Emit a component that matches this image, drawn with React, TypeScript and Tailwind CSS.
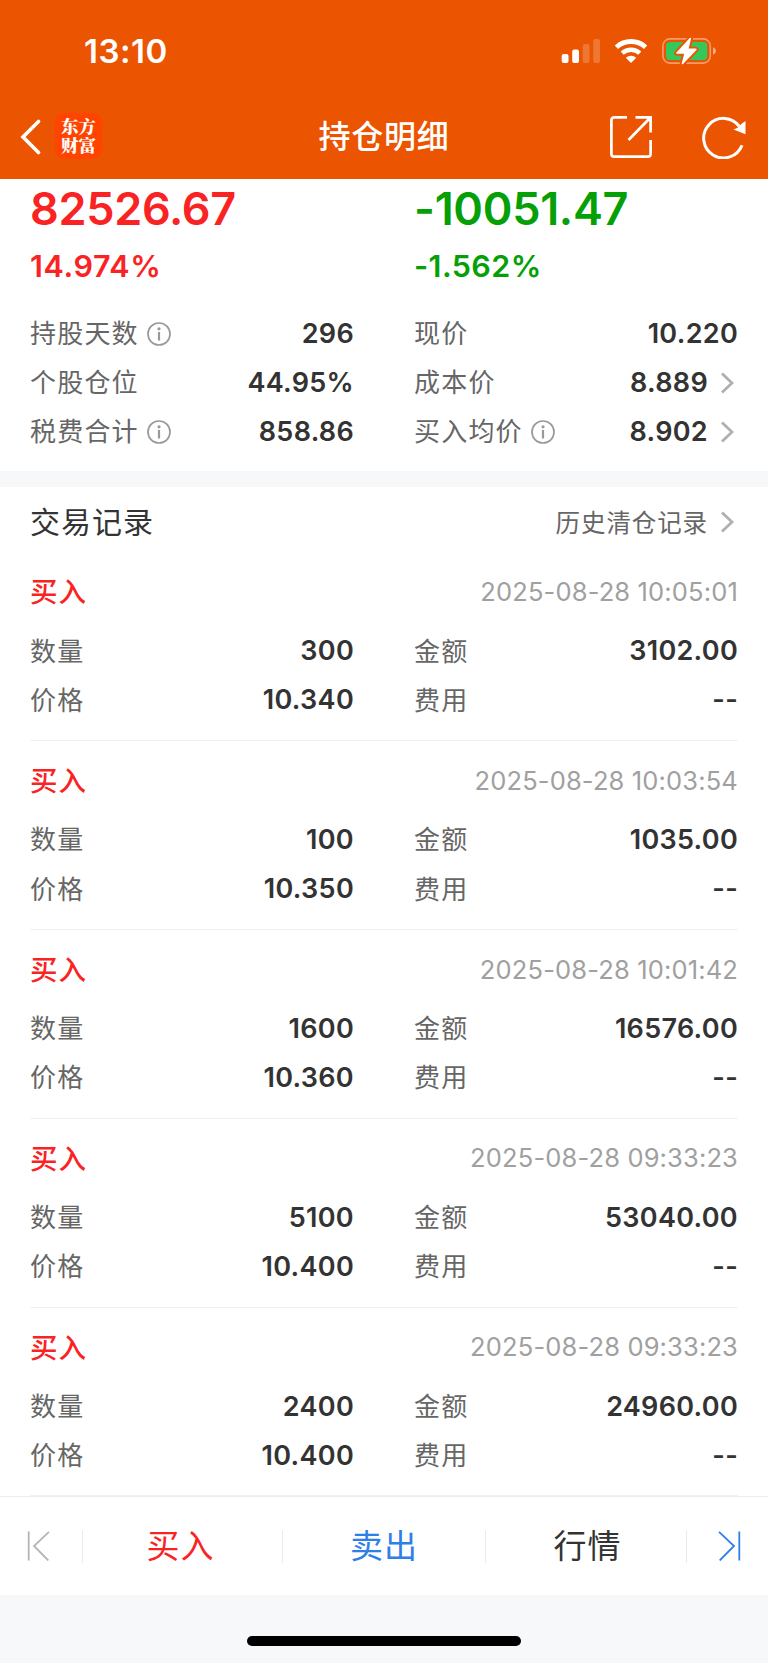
import React from "react";

type Trade = { time: string; qty: string; amount: string; price: string; fee: string };

const trades: Trade[] = [
  { time: "2025-08-28 10:05:01", qty: "300", amount: "3102.00", price: "10.340", fee: "--" },
  { time: "2025-08-28 10:03:54", qty: "100", amount: "1035.00", price: "10.350", fee: "--" },
  { time: "2025-08-28 10:01:42", qty: "1600", amount: "16576.00", price: "10.360", fee: "--" },
  { time: "2025-08-28 09:33:23", qty: "5100", amount: "53040.00", price: "10.400", fee: "--" },
  { time: "2025-08-28 09:33:23", qty: "2400", amount: "24960.00", price: "10.400", fee: "--" },
];

function InfoIcon() {
  return (
    <svg className="ml-[8.500px] h-6 w-6" viewBox="0 0 24 24" fill="none">
      <circle cx="12" cy="12" r="11" stroke="#999" strokeWidth="1.7" />
      <circle cx="12" cy="6.8" r="1.6" fill="#999" />
      <path d="M12 10v8.5" stroke="#999" strokeWidth="2.2" />
    </svg>
  );
}

function Chevron() {
  return (
    <svg className="mr-[4px] ml-[13px] h-[22px] w-[13px]" viewBox="0 0 13 22" fill="none">
      <path d="M1 1.5 11 11 1 20.5" stroke="#b0b0b0" strokeWidth="2.8" />
    </svg>
  );
}

function Row({ label, value, info, arrow }: { label: string; value: string; info?: boolean; arrow?: boolean }) {
  return (
    <div className="flex h-[49.1px] items-center">
      <span className="pt-px text-[26px] leading-[36px] tracking-[1.2px] text-[#666]">{label}</span>
      {info && <InfoIcon />}
      <span className="ml-auto text-[27px] leading-[36px] font-semibold tracking-[0.3px] text-[#333]">{value}</span>
      {arrow && <Chevron />}
    </div>
  );
}

function StatusIcons() {
  return (
    <svg className="h-[30px] w-[160px]" viewBox="560 36 160 30" fill="none">
      <rect x="561.7" y="54" width="6.8" height="9" rx="2" fill="#fff" />
      <rect x="572.2" y="49.5" width="6.8" height="13.5" rx="2" fill="#fff" />
      <rect x="582.7" y="44" width="6.8" height="19" rx="2" fill="#fff" fillOpacity=".2" />
      <rect x="593.2" y="39" width="6.8" height="24" rx="2" fill="#fff" fillOpacity=".2" />
      <path d="M616.4 47.2a21.500 21.500 0 0 1 29.200 0" stroke="#fff" strokeWidth="4.8" />
      <path d="M622.200 53.200a13 13 0 0 1 17.600 0" stroke="#fff" strokeWidth="4.4" />
      <path d="M631 63l-5.2-5.3a7.6 7.6 0 0 1 10.4 0z" fill="#fff" />
      <rect x="662.9" y="38.9" width="47.4" height="24.2" rx="7" stroke="#fff" strokeOpacity=".42" strokeWidth="1.6" />
      <path d="M713 47.3c3.8 1 3.8 6.4 0 7.4z" fill="#fff" fillOpacity=".5" />
      <rect x="666" y="42" width="41.3" height="18" rx="4" fill="#34c759" />
      <path d="M690.3 38.500 677 53h8.2L682.5 63.500 695.8 49.400h-8.2z" fill="#EB5502" stroke="#EB5502" strokeWidth="5.500" strokeLinejoin="round" />
      <path d="M690.3 38.500 677 53h8.2L682.5 63.500 695.8 49.400h-8.2z" fill="#fff" stroke="#fff" strokeWidth="1.600" strokeLinejoin="round" />
    </svg>
  );
}

export default function App() {
  return (
    <div className="flex h-[1663px] w-[768px] flex-col bg-white font-['Inter','Noto_Sans_CJK_SC',sans-serif]">
      <header className="flex h-[179px] shrink-0 flex-col bg-[#EB5502] text-white">
        <div className="flex h-[94px] items-center justify-between pt-[8px] pr-[48px] pl-[84px]">
          <span className="text-[33px] leading-[40px] font-semibold tracking-[0.5px]">13:10</span>
          <StatusIcons />
        </div>
        <div className="grid h-[85px] grid-cols-[1fr_auto_1fr] items-center">
          <div className="flex items-center pl-[20px]">
            <svg className="h-9 w-[22px]" viewBox="0 0 22 36" fill="none">
              <path d="M18.5 2.5 3 18l15.5 15.5" stroke="#fff" strokeWidth="3.6" strokeLinecap="round" />
            </svg>
            <div className="mb-[2px] ml-[13px] flex h-[46px] w-[47px] items-center justify-center rounded-[9px] bg-[#FF4400] pb-px font-['Noto_Serif_CJK_SC','Noto_Sans_CJK_SC',serif] text-[17.5px] leading-[19.5px] font-black">
              <p>
                东方
                <br />
                财富
              </p>
            </div>
          </div>
          <h1 className="text-[32px] leading-[44px] font-medium tracking-[0.8px]">持仓明细</h1>
          <div className="flex items-center justify-end pr-[22px]">
            <svg className="h-[42px] w-[42px]" viewBox="0 0 42 42" fill="none" stroke="#fff" strokeWidth="2.7">
              <path d="M17 1.400H4.100a2.700 2.700 0 0 0-2.700 2.700V37.900a2.700 2.700 0 0 0 2.700 2.700H37.900a2.700 2.700 0 0 0 2.700-2.700V24M25.500 1.400H40.600V16.500M40.500 1.500 18.500 24" />
            </svg>
            <svg className="ml-[50px] h-[44px] w-[44px]" viewBox="0 0 44 44" fill="none">
              <path d="M40 30.200A19.800 19.800 0 1 1 37.500 11.500" stroke="#fff" strokeWidth="3" />
              <path d="M43.500 6v13.200L31.500 14.500q4-1 6-3.500t6-5z" fill="#fff" />
            </svg>
          </div>
        </div>
      </header>

      <section className="grid h-[292px] shrink-0 grid-cols-2 content-start gap-x-[60px] px-[30px]">
        <div className="h-[130px] font-semibold text-[#FA2323]">
          <p className="mt-[2px] text-[45px] leading-[56px] tracking-[-0.3px]">82526.67</p>
          <p className="mt-[9px] text-[30.5px] leading-[40px] tracking-[0.6px]">14.974%</p>
        </div>
        <div className="h-[130px] font-semibold text-[#05A005]">
          <p className="mt-[2px] text-[45px] leading-[56px] tracking-[-0.3px]">-10051.47</p>
          <p className="mt-[9px] text-[30.5px] leading-[40px] tracking-[0.4px]">-1.562%</p>
        </div>
        <Row label="持股天数" value="296" info />
        <Row label="现价" value="10.220" />
        <Row label="个股仓位" value="44.95%" />
        <Row label="成本价" value="8.889" arrow />
        <Row label="税费合计" value="858.86" info />
        <Row label="买入均价" value="8.902" info arrow />
      </section>

      <div className="h-4 shrink-0 bg-[#F6F8FA]" />

      <main className="flex h-[1009px] shrink-0 flex-col px-[30px]">
        <div className="flex h-[65px] shrink-0 items-center justify-between pt-[5px]">
          <h2 className="text-[30px] leading-[42px] tracking-[1px] text-[#333]">交易记录</h2>
          <span className="flex items-center text-[24.500px] leading-[36px] tracking-[0.9px] text-[#666]">
            <span className="pt-px">历史清仓记录</span>
            <Chevron />
          </span>
        </div>
        {trades.map((t, i) => (
          <article key={i} className="h-[188.900px] shrink-0 border-b border-[#F0F0F0]">
            <div className="flex h-[74.500px] items-center justify-between pt-[5px]">
              <span className="pt-px text-[27.500px] leading-[38px] font-medium tracking-[1px] text-[#FA2323]">买入</span>
              <time className="text-[25.500px] leading-[36px] tracking-[0.15px] text-[#A0A0A0]">{t.time}</time>
            </div>
            <div className="grid grid-cols-2 gap-x-[60px]">
              <Row label="数量" value={t.qty} />
              <Row label="金额" value={t.amount} />
              <Row label="价格" value={t.price} />
              <Row label="费用" value={t.fee} />
            </div>
          </article>
        ))}
      </main>

      <nav className="flex h-[99px] shrink-0 items-center border-t border-[#EDEDED] text-[33px] leading-[44px] tracking-[1px]">
        <div className="flex w-[82px] pl-[27px]">
          <svg className="h-[30px] w-[24px]" viewBox="0 0 24 30" fill="none" stroke="#B5B5B5" strokeWidth="1.800">
            <path d="M1.700.5v29M22 .8 7 15l14.300 14.500" />
          </svg>
        </div>
        <div className="h-[33px] w-px bg-[#EAEAEA]" />
        <span className="w-[199px] pr-[4px] text-center text-[#FA2323]">买入</span>
        <div className="h-[33px] w-px bg-[#EAEAEA]" />
        <span className="w-[202px] text-center text-[#2F80E6]">卖出</span>
        <div className="h-[33px] w-px bg-[#EAEAEA]" />
        <span className="flex-1 pl-[3px] text-center text-[#333]">行情</span>
        <div className="h-[33px] w-px bg-[#EAEAEA]" />
        <div className="flex w-[81px] justify-end pr-[27px]">
          <svg className="h-[30px] w-[24px]" viewBox="0 0 24 30" fill="none" stroke="#2F80E6" strokeWidth="1.800">
            <path d="M22.300.5v29M2 .8 17 15 2.700 29.500" />
          </svg>
        </div>
      </nav>
      <footer className="flex flex-1 justify-center bg-[#F6F8FA] pt-[41px]">
        <div className="h-[10px] w-[274px] rounded-full bg-black" />
      </footer>
    </div>
  );
}
